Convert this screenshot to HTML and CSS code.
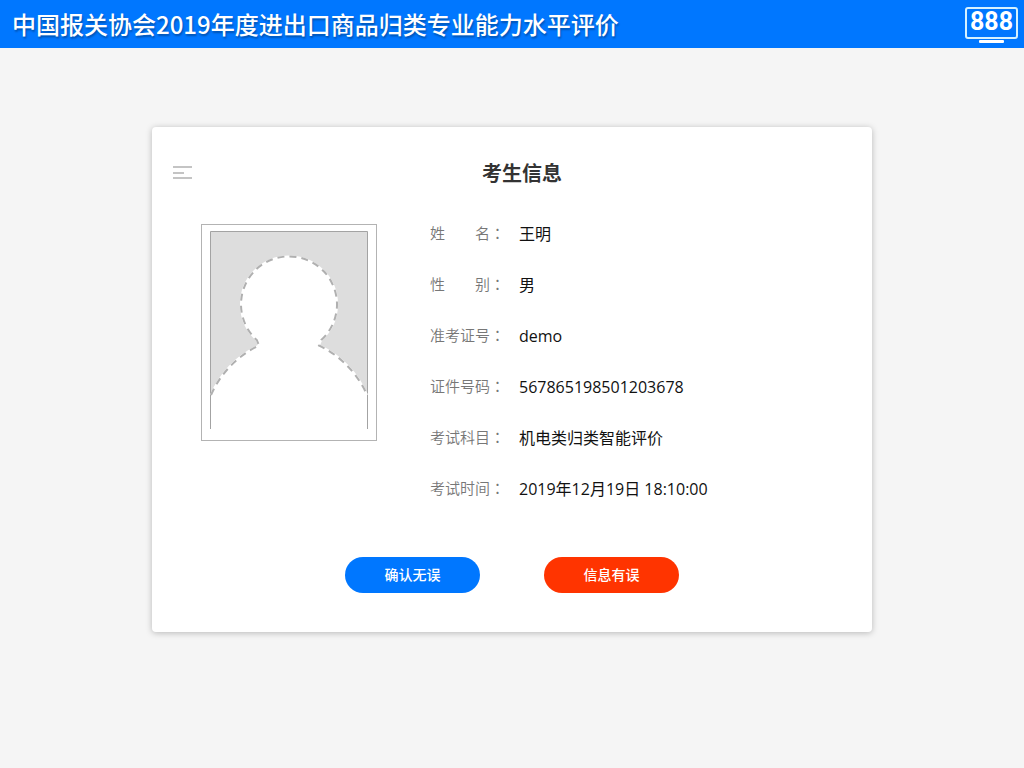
FILE: index.html
```html
<!DOCTYPE html>
<html lang="zh-CN">
<head>
    <meta charset="UTF-8">
    <meta name="viewport" content="width=device-width, initial-scale=1.0">
    <title>考生信息</title>
    <link rel="stylesheet" href="styles.css">
</head>
<body>
    <header class="header">
        <h1 class="header-title">中国报关协会2019年度进出口商品归类专业能力水平评价</h1>
        <div class="seat">
            <span class="seat-number">888</span>
            <span class="seat-stand"></span>
        </div>
    </header>

    <main class="card">
        <div class="card-head">
            <button type="button" class="menu-btn" aria-label="菜单">
                <svg width="20" height="14" viewBox="0 0 20 14">
                    <path d="M1 1h19M1 7h11M1 12h19" stroke="#c4c4c4" stroke-width="2"/>
                </svg>
            </button>
            <h2 class="card-title">考生信息</h2>
        </div>

        <div class="card-body">
            <svg class="photo" width="176" height="217" viewBox="0 0 176 217" role="img" aria-label="照片">
                <rect x="0.5" y="0.5" width="175" height="216" fill="#fff" stroke="#b3b3b3"/>
                <path d="M9.500 7.500H166.500V171A99 99 0 0 0 118 121.500L120.200 116A48 48 0 1 0 55.800 116L58 121.500A99 99 0 0 0 9.500 171Z" fill="#ddd"/>
                <path d="M9.500 205V7.500H166.500V205" fill="none" stroke="#a3a3a3"/>
                <path d="M10 171A99 99 0 0 1 58 121.500L55.800 116A48 48 0 1 1 120.200 116L118 121.500A99 99 0 0 1 166 171" fill="none" stroke="#fff" stroke-width="2"/>
                <path d="M10 171A99 99 0 0 1 58 121.500L55.800 116A48 48 0 1 1 120.200 116L118 121.500A99 99 0 0 1 166 171" fill="none" stroke="#b0b0b0" stroke-width="2" stroke-dasharray="7 5"/>
            </svg>

            <dl class="info">
                <div class="row"><dt><span class="label">姓 名</span><span class="colon">：</span></dt><dd>王明</dd></div>
                <div class="row"><dt><span class="label">性 别</span><span class="colon">：</span></dt><dd>男</dd></div>
                <div class="row"><dt><span class="label">准考证号</span><span class="colon">：</span></dt><dd>demo</dd></div>
                <div class="row"><dt><span class="label">证件号码</span><span class="colon">：</span></dt><dd>567865198501203678</dd></div>
                <div class="row"><dt><span class="label">考试科目</span><span class="colon">：</span></dt><dd>机电类归类智能评价</dd></div>
                <div class="row"><dt><span class="label">考试时间</span><span class="colon">：</span></dt><dd>2019年12月19日 18:10:00</dd></div>
            </dl>
        </div>

        <div class="actions">
            <button type="button" class="btn btn-ok">确认无误</button>
            <button type="button" class="btn btn-error">信息有误</button>
        </div>
    </main>
</body>
</html>
```

FILE: styles.css
```css
* { box-sizing: border-box; }
body { margin: 0; background-color: #f5f5f5; color: #111; font-family: "Noto Sans CJK SC", sans-serif; font-size: 16px; }
h1, h2, dl, dd { margin: 0; }
button { font-family: inherit; border: none; cursor: pointer; }

.header { display: flex; align-items: center; justify-content: space-between; height: 48px; padding: 0 6px 0 12px; background-color: #07f; color: #fff; }
.header-title { font-size: 24px; font-weight: 500; line-height: 48px; text-shadow: 1px 2px 2px rgba(0, 0, 0, 0.3); }
.seat { display: flex; flex-direction: column; align-items: center; gap: 1px; padding-top: 2px; }
.seat-number { width: 53px; height: 32px; border: 2px solid #d5f1ff; border-radius: 3px; font: bold 25px/26px Roboto, sans-serif; text-align: center; }
.seat-stand { width: 25px; height: 3px; border-radius: 1px; background-color: #fff; }

.card { max-width: 720px; margin: 79px auto; padding: 32px 20px 39px; background-color: #fff; border-radius: 4px; box-shadow: 0 1px 6px rgba(0, 0, 0, 0.25); }
.card-head { display: flex; align-items: center; height: 28px; }
.menu-btn { display: flex; width: 20px; padding: 0; background: none; }
.card-title { flex: 1; color: #333; font-size: 20px; font-weight: bold; line-height: 28px; text-align: center; }

.card-body { display: flex; gap: 53px; padding: 35px 0 0 29px; }
.photo { flex: none; margin-top: 2px; }
.info { flex: 1; display: grid; gap: 27px; padding-bottom: 56px; }
.row { display: flex; gap: 14px; line-height: 24px; }
.row dt { display: flex; color: #777; font-size: 15px; line-height: 22px; }
.row dd { font-family: "Open Sans", "Noto Sans CJK SC", sans-serif; }
.label { width: 60px; text-align: justify; text-align-last: justify; }
.colon { font-family: "Noto Sans CJK TC", sans-serif; }
.label, .colon { font-weight: 350; }

.actions { display: flex; justify-content: center; gap: 64px; }
.btn { width: 135px; height: 36px; padding: 0 0 2px; border-radius: 18px; color: #fff; font-size: 14px; font-weight: 500; }
.btn-ok { background-color: #07f; }
.btn-error { background-color: #ff3400; }
```
